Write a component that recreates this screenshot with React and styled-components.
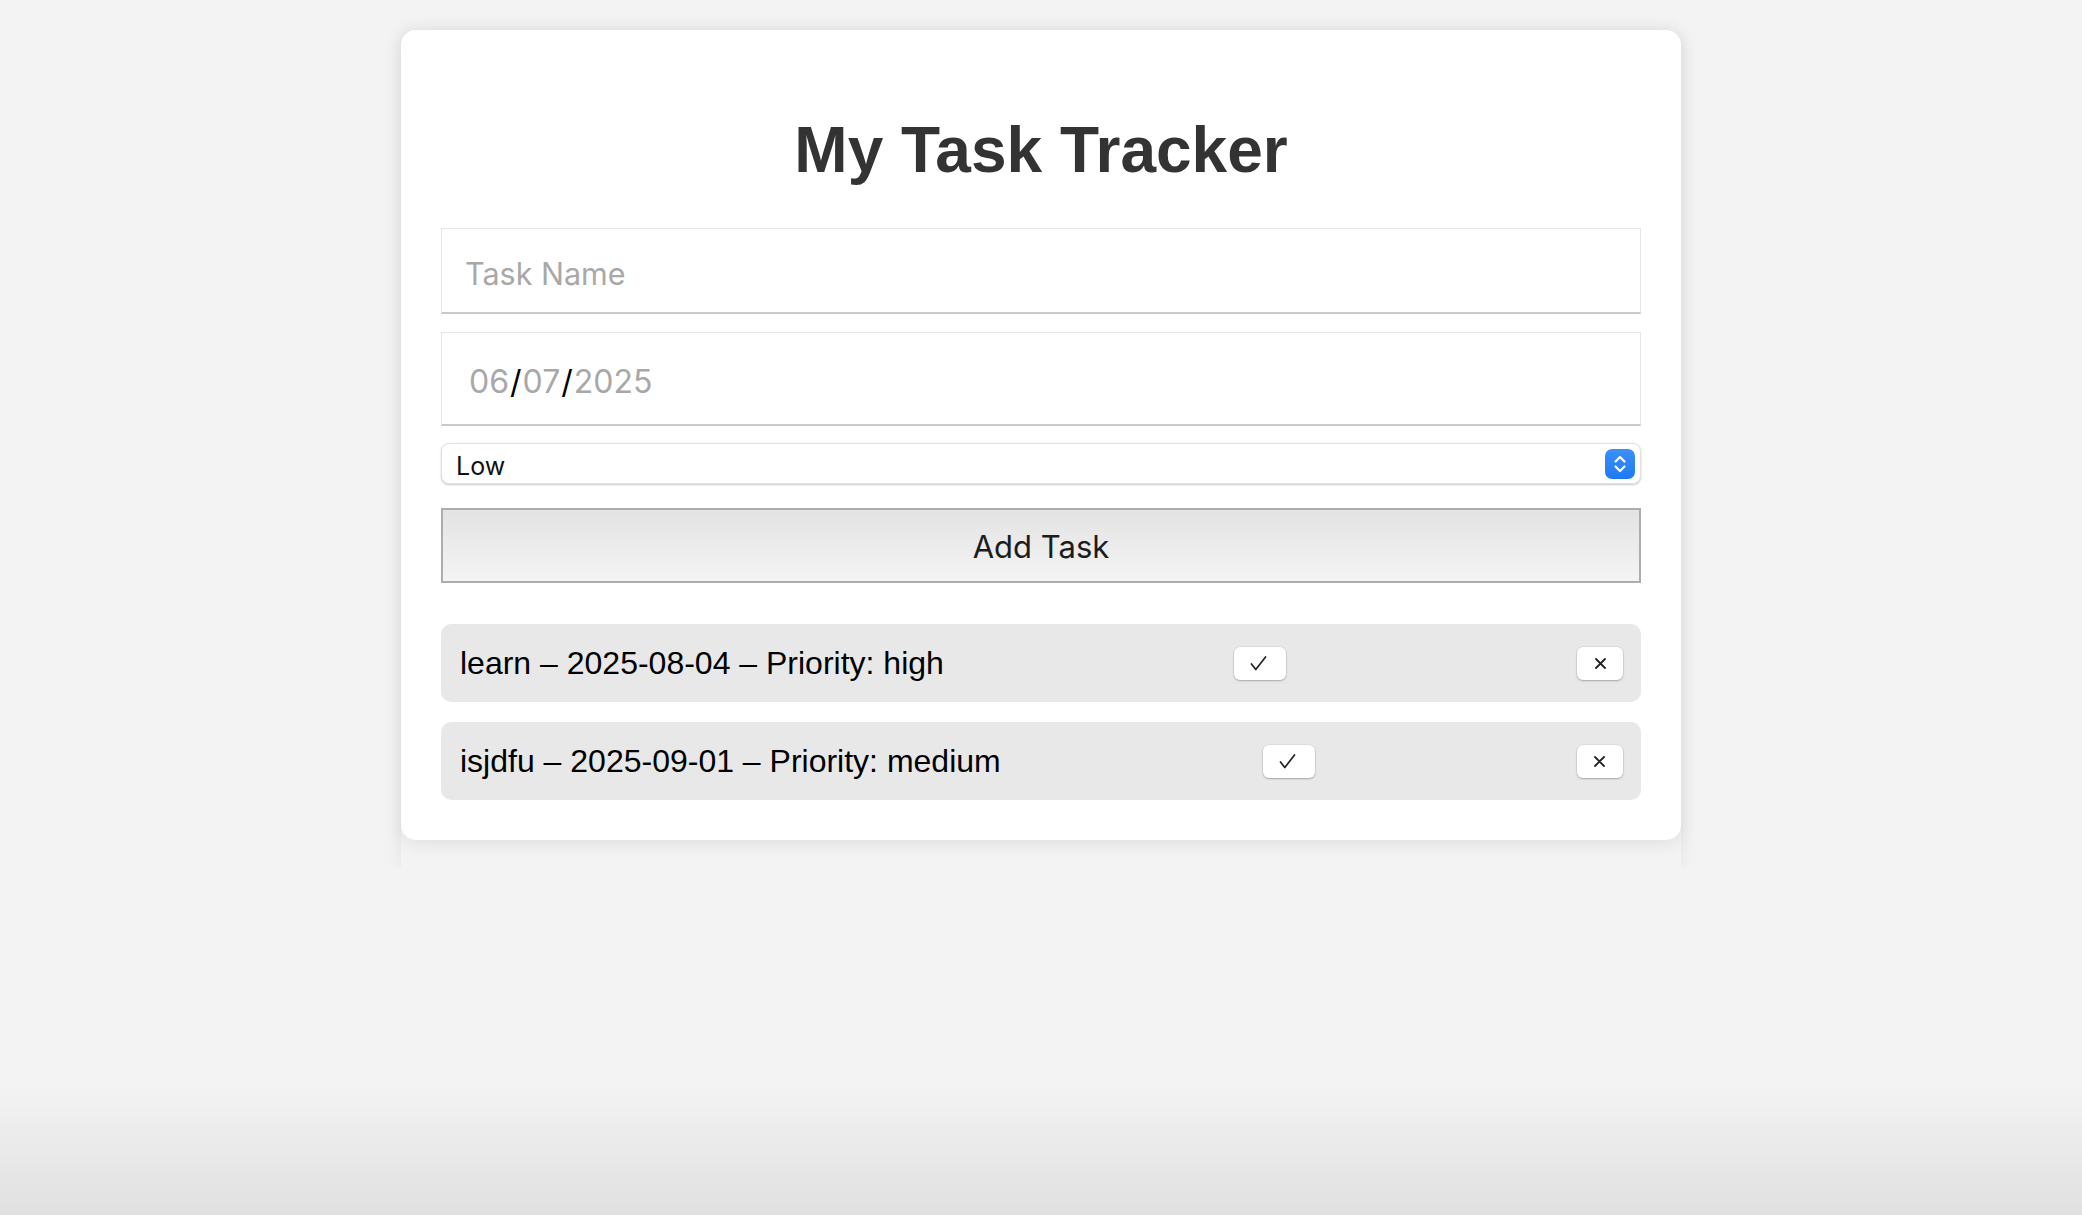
import React, { useState } from "react";
import styled, { createGlobalStyle } from "styled-components";

const GlobalStyle = createGlobalStyle`
  html, body {
    margin: 0;
    padding: 0;
  }
  body {
    background: #f3f3f3;
    min-height: 100vh;
    font-family: "Liberation Sans", Arial, sans-serif;
  }
  body::after {
    content: "";
    position: fixed;
    left: 0;
    right: 0;
    bottom: 0;
    height: 130px;
    pointer-events: none;
    background: linear-gradient(to bottom, rgba(0, 0, 0, 0) 0%, rgba(0, 0, 0, 0.075) 100%);
  }
`;

const Sheet = styled.div`
  width: 1280px;
  margin: 30px auto 0;
  padding-bottom: 28px;
  border-radius: 15px 15px 0 0;
  box-shadow: 0 0 18px rgba(0, 0, 0, 0.07);
  clip-path: inset(-40px -40px 0 -40px);
`;

const Card = styled.main`
  background: #fff;
  border-radius: 15px;
  padding: 40px;
  box-shadow: 0 4px 18px rgba(0, 0, 0, 0.08);
`;

const Title = styled.h1`
  margin: 43px 0 41px;
  text-align: center;
  font-family: "Liberation Sans", Arial, sans-serif;
  font-size: 64px;
  line-height: 74px;
  font-weight: 700;
  color: #333;
`;

const Form = styled.form`
  display: flex;
  flex-direction: column;
`;

const TextField = styled.input`
  box-sizing: border-box;
  width: 100%;
  height: ${(p) => p.$h}px;
  margin-bottom: ${(p) => p.$gap}px;
  padding: 5px 23px 0;
  border: 1px solid #e6e6e6;
  border-bottom: 2px solid #c9c9c9;
  border-radius: 0;
  background: #fff;
  outline: none;
  font-family: Inter, "Liberation Sans", sans-serif;
  font-size: 30.5px;
  color: #222;
  &::placeholder {
    color: #a8a8a8;
  }
`;

const DateField = styled.div`
  box-sizing: border-box;
  height: 94px;
  margin-bottom: 17px;
  padding: 5px 27px 0;
  display: flex;
  align-items: center;
  border: 1px solid #e6e6e6;
  border-bottom: 2px solid #c9c9c9;
  background: #fff;
  font-family: Inter, "Liberation Sans", sans-serif;
  font-size: 32px;
  color: #a8a8a8;
`;

const Slash = styled.span`
  color: #000;
  margin: 0 1px;
`;

const SelectBox = styled.div`
  position: relative;
  box-sizing: border-box;
  height: 41px;
  margin-bottom: 24px;
  padding: 4px 14px 0;
  display: flex;
  align-items: center;
  justify-content: space-between;
  border: 1px solid #e2e2e2;
  border-radius: 8px;
  background: #fff;
  box-shadow: 0 1px 2px rgba(0, 0, 0, 0.22);
  font-family: Inter, "Liberation Sans", sans-serif;
  font-size: 25px;
  color: #111;
`;

const Stepper = styled.span`
  position: absolute;
  right: 5px;
  top: 50%;
  transform: translateY(-50%);
  width: 30px;
  height: 30px;
  border-radius: 7px;
  background: linear-gradient(#3b90f8, #1f7af2);
  display: flex;
  align-items: center;
  justify-content: center;
`;

const AddButton = styled.button`
  box-sizing: border-box;
  height: 75px;
  margin-bottom: 41px;
  padding-top: 2px;
  border: 2px solid #adadad;
  background: linear-gradient(#e3e3e3, #f4f4f4);
  font-family: Inter, "Liberation Sans", sans-serif;
  font-size: 31px;
  color: #1c1c1c;
  cursor: pointer;
`;

const List = styled.ul`
  list-style: none;
  margin: 0;
  padding: 0;
  display: flex;
  flex-direction: column;
  gap: 20px;
`;

const Row = styled.li`
  box-sizing: border-box;
  height: 78px;
  padding: 0 18px 0 19px;
  display: flex;
  align-items: center;
  justify-content: space-between;
  background: #e8e8e8;
  border-radius: 10px;
  font-family: "Liberation Sans", Arial, sans-serif;
  font-size: 32px;
  color: #000;
`;

const IconButton = styled.button`
  box-sizing: border-box;
  height: 33px;
  width: ${(p) => p.$w}px;
  padding: 0;
  display: flex;
  align-items: center;
  justify-content: center;
  background: #fff;
  border: none;
  border-radius: 6px;
  box-shadow: 0 1px 2px rgba(0, 0, 0, 0.25), 0 0 0 0.5px rgba(0, 0, 0, 0.08);
  cursor: pointer;
`;

const CheckIcon = () => (
  <svg width="17" height="15" viewBox="0 0 17 15" style={{ marginRight: 3 }}>
    <polyline points="1.5,8 5.8,13.5 15.5,1" fill="none" stroke="#222" strokeWidth="1.7" strokeLinecap="round" strokeLinejoin="round" />
  </svg>
);

const CrossIcon = () => (
  <svg width="11" height="11" viewBox="0 0 11 11">
    <path d="M1 1 L10 10 M10 1 L1 10" stroke="#222" strokeWidth="1.8" strokeLinecap="round" />
  </svg>
);

const Chevrons = () => (
  <svg width="16" height="22" viewBox="0 0 16 22">
    <path d="M3.5 8.5 L8 4 L12.5 8.5 M3.5 13.5 L8 18 L12.5 13.5" fill="none" stroke="#fff" strokeWidth="2.2" strokeLinecap="round" strokeLinejoin="round" />
  </svg>
);

const tasks = [
  { id: 1, name: "learn", date: "2025-08-04", priority: "high" },
  { id: 2, name: "isjdfu", date: "2025-09-01", priority: "medium" },
];

export default function App() {
  const [name, setName] = useState("");

  return (
    <>
      <GlobalStyle />
      <Sheet>
        <Card>
          <Title>My Task Tracker</Title>
          <Form onSubmit={(e) => e.preventDefault()}>
            <TextField
              $h={86}
              $gap={18}
              placeholder="Task Name"
              value={name}
              onChange={(e) => setName(e.target.value)}
            />
            <DateField>
              06<Slash>/</Slash>07<Slash>/</Slash>2025
            </DateField>
            <SelectBox>
              Low
              <Stepper>
                <Chevrons />
              </Stepper>
            </SelectBox>
            <AddButton type="submit">Add Task</AddButton>
          </Form>
          <List>
            {tasks.map((t) => (
              <Row key={t.id}>
                <span>
                  {t.name} – {t.date} – Priority: {t.priority}
                </span>
                <IconButton $w={52}>
                  <CheckIcon />
                </IconButton>
                <IconButton $w={46}>
                  <CrossIcon />
                </IconButton>
              </Row>
            ))}
          </List>
        </Card>
      </Sheet>
    </>
  );
}
